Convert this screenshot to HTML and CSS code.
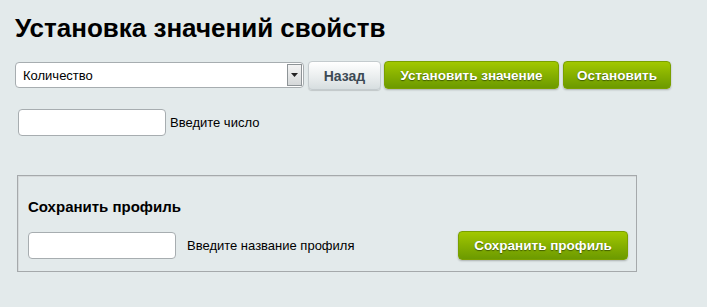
FILE: index.html
```html
<!DOCTYPE html>
<html lang="ru">
<head>
<meta charset="utf-8">
<title>Установка значений свойств</title>
<link rel="stylesheet" href="styles.css">
</head>
<body>
<div class="page">
  <h1 class="title">Установка значений свойств</h1>
  <div class="toolbar">
    <div class="select">
      <span class="select-text">Количество</span>
      <span class="select-arrow"><svg width="7" height="4" viewBox="0 0 7 4"><path d="M0 0h7L3.5 4z" fill="#222"/></svg></span>
    </div>
    <button class="btn btn-grey">Назад</button>
    <button class="btn btn-green btn-set">Установить значение</button>
    <button class="btn btn-green btn-stop">Остановить</button>
  </div>
  <div class="field-row">
    <input class="text-input" type="text">
    <span class="label">Введите число</span>
  </div>
  <div class="profile-box">
    <div class="profile-title">Сохранить профиль</div>
    <div class="profile-row">
      <input class="text-input input-profile" type="text">
      <span class="label label-profile">Введите название профиля</span>
      <button class="btn btn-green btn-save">Сохранить профиль</button>
    </div>
  </div>
</div>
</body>
</html>
```
FILE: styles.css
```css
html, body {
  margin: 0;
  padding: 0;
}
body {
  background: #e3eaeb;
  font-family: "Liberation Sans", Arial, sans-serif;
  color: #000;
  width: 707px;
  height: 307px;
  overflow: hidden;
}
.page {
  padding: 13px 0 0 15px;
}
.title {
  margin: 0;
  font-size: 26px;
  font-weight: bold;
  line-height: 31px;
  color: #000;
}
.toolbar {
  display: flex;
  align-items: flex-start;
  margin-top: 17px;
}
.select {
  box-sizing: border-box;
  width: 289px;
  height: 26px;
  margin-top: 1px;
  border: 1px solid #a7adb0;
  border-radius: 4px;
  background: #fff;
  display: flex;
  align-items: center;
  justify-content: space-between;
  padding: 0 1px 0 7px;
  font-size: 13px;
}
.select-arrow {
  box-sizing: border-box;
  width: 15px;
  height: 22px;
  border: 1px solid #8e9497;
  background: linear-gradient(#f4f4f4, #d5d8d9);
  display: flex;
  align-items: center;
  justify-content: center;
}
.btn {
  box-sizing: border-box;
  font-family: "Liberation Sans", Arial, sans-serif;
  font-size: 14px;
  font-weight: bold;
  border-radius: 4px;
  padding: 0;
  cursor: pointer;
}
.btn-grey {
  width: 73px;
  height: 29px;
  margin-left: 4px;
  border: 1px solid #c4cbce;
  background: linear-gradient(#ffffff, #e8eced 60%, #d7dee0);
  color: #3d4a55;
  box-shadow: 0 1px 1px rgba(0,0,0,0.15);
}
.btn-green {
  height: 28px;
  font-size: 13.5px;
  border: 1px solid #7aa000;
  background: linear-gradient(#a2c800, #86b000 50%, #6c9a00);
  color: #fff;
  text-shadow: 0 1px 1px rgba(40,60,0,0.7);
  box-shadow: 0 1px 2px rgba(0,0,0,0.25);
}
.btn-set {
  width: 175px;
  margin-left: 3px;
}
.btn-stop {
  width: 108px;
  margin-left: 4px;
}
.field-row {
  display: flex;
  align-items: center;
  margin-top: 19px;
  margin-left: 3px;
}
.text-input {
  box-sizing: border-box;
  width: 148px;
  height: 27px;
  border: 1px solid #a7adb0;
  border-radius: 4px;
  background: #fff;
  margin: 0;
}
.label {
  font-size: 13px;
  color: #000;
  margin-left: 4px;
}
.profile-box {
  box-sizing: border-box;
  width: 620px;
  height: 97px;
  margin-top: 39px;
  margin-left: 2px;
  border: 1px solid #a5a9ab;
  box-shadow: inset 1px 1px 0 #d6dadb;
  padding: 22px 0 0 10px;
}
.profile-title {
  font-size: 15px;
  font-weight: bold;
  line-height: 18px;
}
.profile-row {
  display: flex;
  align-items: center;
  margin-top: 15px;
}
.label-profile {
  margin-left: 11px;
}
.btn-save {
  width: 170px;
  height: 29px;
  margin-left: auto;
  margin-right: 8px;
}
```
